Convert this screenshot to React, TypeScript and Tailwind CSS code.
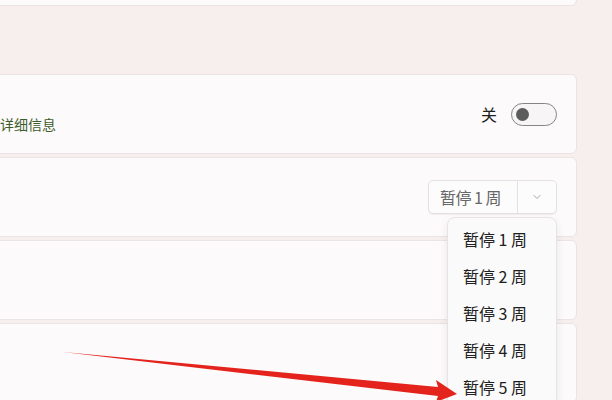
import { ChevronDown } from 'lucide-react';

const font = { fontFamily: '"Noto Sans CJK SC", "Noto Sans", sans-serif' };

const Card = ({ children, className = '' }: { children?: React.ReactNode; className?: string }) => (
  <div className={`h-[80px] shrink-0 rounded-md border border-[#ebe4e4] bg-[#fcfafa] ${className}`}>{children}</div>
);

export default function App() {
  const weeks = [1, 2, 3, 4, 5];
  return (
    <div className="relative h-[400px] w-[612px] overflow-hidden bg-[#f6efee]" style={font}>
      <div className="ml-[-20px] mt-[-74px] flex w-[597px] flex-col gap-[3px]">
        <Card />
        <div className="h-[62px] shrink-0" />
        <Card className="flex items-center justify-between pr-[19px]">
          <span className="ml-[-9px] mt-[20px] text-[14px] text-[#3e5d2d]">了解详细信息</span>
          <div className="flex items-center gap-[14px]">
            <span className="text-[16px] text-[#1f1f1f]">关</span>
            <div className="flex h-[23px] w-[46px] items-center rounded-full border border-[#858585] bg-[#f7f5f5] pl-[4px]">
              <div className="h-[13px] w-[13px] rounded-full bg-[#5c5c5c]" />
            </div>
          </div>
        </Card>
        <Card className="flex items-center justify-end pr-[19px]">
          <div className="flex h-[34px] w-[129px] items-stretch rounded-[5px] border border-[#e6e1e1] bg-[#fdfcfc] shadow-[0_1px_1px_rgba(0,0,0,0.06)]">
            <div className="flex w-[88px] items-center pl-[11px] text-[16px] tracking-[-0.5px] text-[#666]">暂停 1 周</div>
            <div className="w-px bg-[#e6e1e1]" />
            <div className="flex flex-1 items-center justify-center">
              <ChevronDown size={12} strokeWidth={1.5} className="text-[#8a8a8a]" />
            </div>
          </div>
        </Card>
        <Card />
        <Card />
      </div>

      <div className="absolute left-[447px] top-[217px] w-[110px] rounded-lg border border-[#e8e3e3] bg-[#fbfafa] py-[2px] shadow-[0_4px_10px_rgba(0,0,0,0.08)]">
        {weeks.map((w) => (
          <div key={w} className="flex h-[37px] items-center pl-[15px] text-[16px] text-[#202020]">
            暂停 {w} 周
          </div>
        ))}
      </div>

      <svg className="absolute left-0 top-0" width="612" height="400" viewBox="0 0 612 400">
        <polygon points="63,352 438,387 436,380 457,394 436,402 438,396" fill="#e3231c" />
      </svg>
    </div>
  );
}
